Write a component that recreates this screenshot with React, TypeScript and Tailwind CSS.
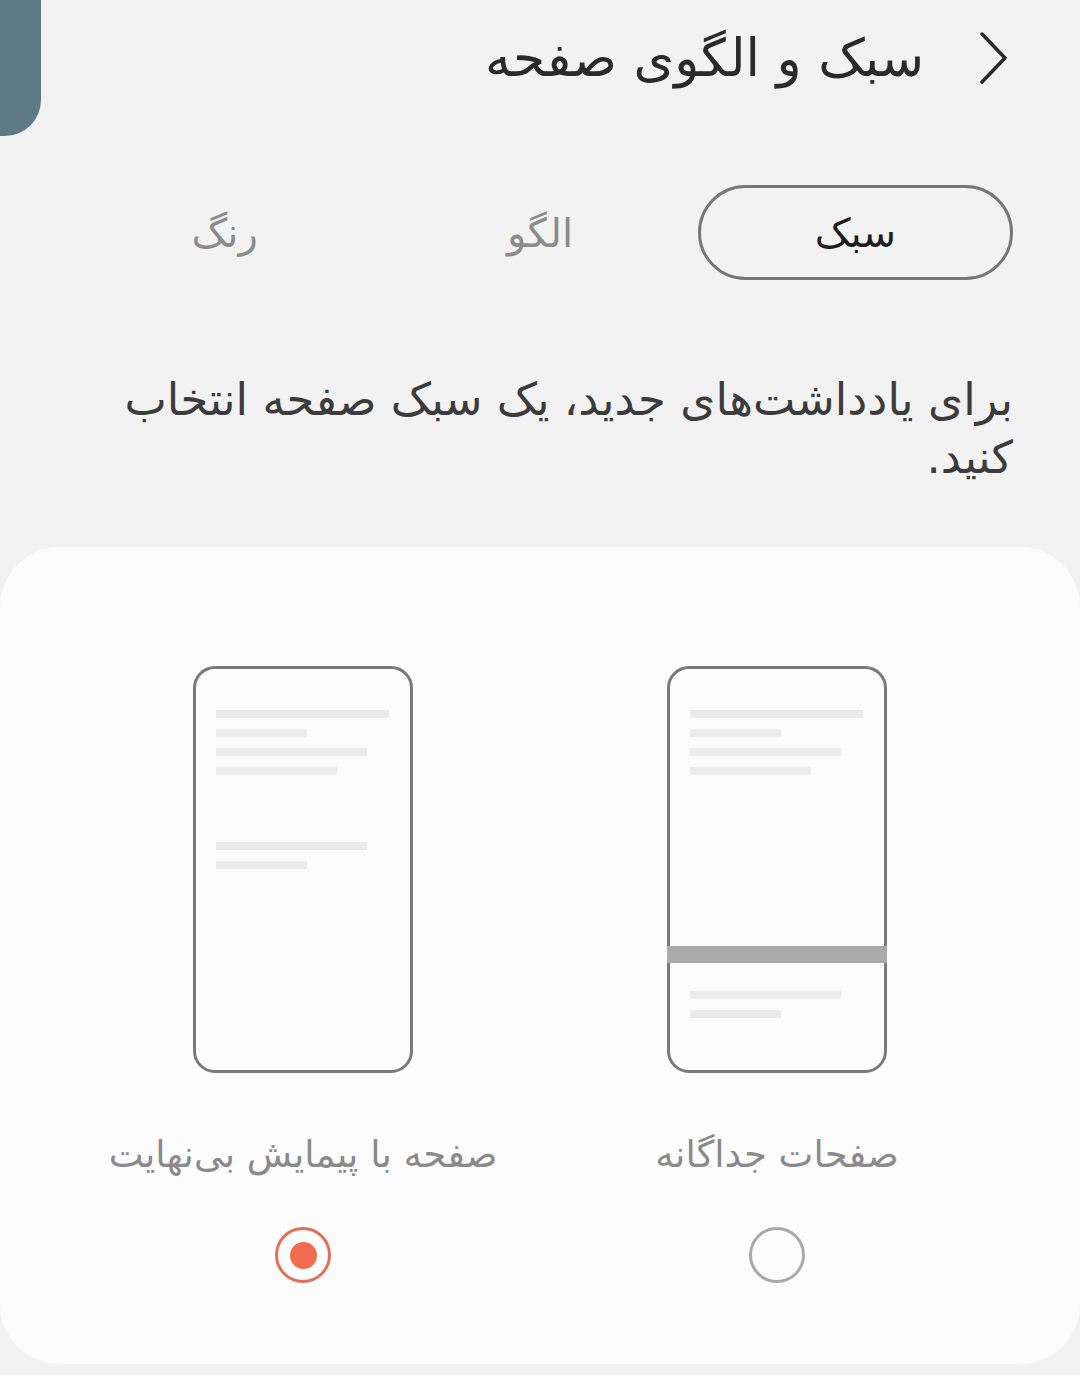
import React from 'react';

const Line: React.FC<{ w: number; mt?: number }> = ({ w, mt = 11 }) => (
  <div className="h-[8px] bg-[#ebebeb]" style={{ width: w, marginTop: mt }} />
);

const PhoneScroll: React.FC = () => (
  <div dir="ltr" className="w-[220px] h-[407px] rounded-[22px] border-[3px] border-[#7a7a7a] pl-[20px] pt-[30px]">
    <Line w={173} />
    <Line w={91} />
    <Line w={151} />
    <Line w={121} />
    <Line w={151} mt={67} />
    <Line w={91} />
  </div>
);

const PhonePages: React.FC = () => (
  <div dir="ltr" className="w-[220px] h-[407px] rounded-[22px] border-[3px] border-[#7a7a7a] flex flex-col">
    <div className="pl-[20px] pt-[30px]">
      <Line w={173} />
      <Line w={91} />
      <Line w={151} />
      <Line w={121} />
    </div>
    <div className="-mx-[3px] mt-[171px] h-[17px] bg-[#aaaaaa]" />
    <div className="pl-[20px] pt-[17px]">
      <Line w={151} />
      <Line w={91} />
    </div>
  </div>
);

const Radio: React.FC<{ checked?: boolean }> = ({ checked }) =>
  checked ? (
    <div className="w-[56px] h-[56px] rounded-full border-[3px] border-[#e0705a] flex items-center justify-center">
      <div className="w-[27px] h-[27px] rounded-full bg-[#f26b4f]" />
    </div>
  ) : (
    <div className="w-[56px] h-[56px] rounded-full border-[3px] border-[#a9a9a9]" />
  );

export default function App() {
  return (
    <div
      dir="rtl"
      className="relative w-[1080px] h-[1375px] overflow-hidden bg-[#f2f2f2] text-[#2a2a2a]"
      style={{ fontFamily: '"DejaVu Sans", "Noto Sans", sans-serif' }}
    >
      {/* floating handle at the left edge */}
      <div className="absolute left-0 top-0 w-[41px] h-[136px] rounded-br-[36px] bg-[#5f7a87]" />

      {/* Header */}
      <div className="h-[116px] flex items-center pr-[72px] gap-[56px]">
        <svg width="28" height="52" viewBox="0 0 28 52" fill="none">
          <path d="M2 2 L25 26 L2 50" stroke="#2a2a2a" strokeWidth="3.5" strokeLinecap="round" strokeLinejoin="round" />
        </svg>
        <h1 className="text-[52px] leading-none font-normal">سبک و الگوی صفحه</h1>
      </div>

      {/* Tabs */}
      <div className="mt-[69px] px-[67px] grid grid-cols-3 h-[95px]">
        <div className="rounded-full border-[3px] border-[#767676] flex items-center justify-center text-[40px] text-[#1e1e1e]">
          سبک
        </div>
        <div className="flex items-center justify-center text-[40px] text-[#8c8c8c]">الگو</div>
        <div className="flex items-center justify-center text-[40px] text-[#8c8c8c]">رنگ</div>
      </div>

      {/* Description */}
      <p className="mt-[91px] px-[67px] text-[45px] leading-[58px] text-[#3c3c3c]">
        برای یادداشت‌های جدید، یک سبک صفحه انتخاب
        <br />
        کنید.
      </p>

      {/* Card */}
      <div className="mt-[60px] h-[817px] rounded-[60px] bg-[#fcfcfc] px-[66px] pt-[119px] grid grid-cols-2">
        <div className="flex flex-col items-center">
          <PhonePages />
          <div className="mt-[57px] h-[50px] flex items-center text-[37px] text-[#8a8a8a]">صفحات جداگانه</div>
          <div className="mt-[47px]">
            <Radio />
          </div>
        </div>
        <div className="flex flex-col items-center">
          <PhoneScroll />
          <div className="mt-[57px] h-[50px] flex items-center text-[37px] text-[#8a8a8a]">صفحه با پیمایش بی‌نهایت</div>
          <div className="mt-[47px]">
            <Radio checked />
          </div>
        </div>
      </div>
    </div>
  );
}
